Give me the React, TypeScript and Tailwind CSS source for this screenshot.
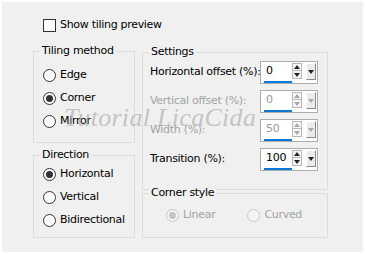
import React from 'react';

const FONT = { fontFamily: '"DejaVu Sans", "Liberation Sans", sans-serif' };

function Radio({ checked, disabled, label }: { checked?: boolean; disabled?: boolean; label: string }) {
  return (
    <div className="flex items-center h-[23px] gap-[4px]">
      <span
        className={`w-[13px] h-[13px] rounded-full border flex items-center justify-center shrink-0 ${
          disabled ? 'border-[#c6c6c6] bg-[#f4f4f4]' : 'border-[#333333] bg-white'
        }`}
      >
        {checked && (
          <span className={`w-[7px] h-[7px] rounded-full ${disabled ? 'bg-[#c4c4c4]' : 'bg-[#333333]'}`} />
        )}
      </span>
      <span className={`whitespace-nowrap ${disabled ? 'text-[#a3a3a3]' : 'text-black'}`}>{label}</span>
    </div>
  );
}

function Group({ title, className, children }: { title: string; className?: string; children: React.ReactNode }) {
  return (
    <div className={`relative border border-[#dcdcdc] ${className ?? ''}`}>
      <span className="absolute left-[6px] -top-[8px] px-[2px] bg-[#f0f0f0] leading-[14px] text-black whitespace-nowrap">
        {title}
      </span>
      {children}
    </div>
  );
}

function Spinner({ value, disabled }: { value: string; disabled?: boolean }) {
  const arrow = disabled ? '#a8a8a8' : '#222222';
  return (
    <div className="w-[58px] h-[23px] border border-[#acacac] bg-white flex items-start shrink-0">
      <div className="w-[31px] h-full flex flex-col pl-[3px] pt-[2px]">
        <span className={`pl-[2px] leading-[14px] ${disabled ? 'text-[#9a9a9a]' : 'text-black'}`}>{value}</span>
        <span className="mt-[3px] w-[28px] h-[2px] bg-[#0a78d7]" />
      </div>
      <div className="w-[10px] mt-[1px] flex flex-col">
        <div className="h-[8px] border border-[#b8b8b8] bg-[#f6f6f6] flex items-center justify-center">
          <svg width="6" height="4" viewBox="0 0 6 4"><path d="M3 0 L6 4 L0 4 Z" fill={arrow} /></svg>
        </div>
        <div className="h-[8px] border border-[#b8b8b8] border-t-0 bg-[#f6f6f6] flex items-center justify-center">
          <svg width="6" height="4" viewBox="0 0 6 4"><path d="M0 0 L6 0 L3 4 Z" fill={arrow} /></svg>
        </div>
      </div>
      <div className="ml-[4px] mt-[1px] w-[10px] h-[17px] bg-[#ececec] border-l border-t border-l-white border-t-white border-r border-b border-r-[#8a8a8a] border-b-[#8a8a8a] flex items-center justify-center">
        <svg width="6" height="4" viewBox="0 0 6 4"><path d="M0 0 L6 0 L3 4 Z" fill={arrow} /></svg>
      </div>
    </div>
  );
}

function Row({ label, value, disabled }: { label: string; value: string; disabled?: boolean }) {
  return (
    <div className="flex items-center h-[23px]">
      <span className={`w-[110px] whitespace-nowrap ${disabled ? 'text-[#a3a3a3]' : 'text-black'}`}>{label}</span>
      <Spinner value={value} disabled={disabled} />
    </div>
  );
}

export default function App() {
  return (
    <div className="w-[365px] h-[254px] bg-white p-[2px] text-[11px] tracking-[-0.3px]" style={FONT}>
      <div className="relative w-[361px] h-[250px] bg-[#f0f0f0]">
        <div className="flex items-center gap-[4px] pl-[41px] pt-[17px] h-[30px]">
          <span className="w-[13px] h-[13px] border border-[#333333] bg-white" />
          <span className="text-black">Show tiling preview</span>
        </div>

        <div className="flex items-start gap-[7px] pl-[31px] mt-[19px]">
          <div className="w-[102px] flex flex-col">
            <Group title="Tiling method" className="h-[92px] pl-[9px] pt-[12px]">
              <Radio label="Edge" />
              <Radio label="Corner" checked />
              <Radio label="Mirror" />
            </Group>
            <Group title="Direction" className="mt-[12px] h-[83px] pl-[9px] pt-[7px]">
              <Radio label="Horizontal" checked />
              <Radio label="Vertical" />
              <Radio label="Bidirectional" />
            </Group>
          </div>

          <div className="w-[186px] flex flex-col mt-[1px]">
            <Group title="Settings" className="h-[138px] pl-[7px] pt-[8px] flex flex-col gap-[6px]">
              <Row label="Horizontal offset (%):" value="0" />
              <Row label="Vertical offset (%):" value="0" disabled />
              <Row label="Width (%):" value="50" disabled />
              <Row label="Transition (%):" value="100" />
            </Group>
            <Group title="Corner style" className="mt-[3px] h-[45px] pt-[10px] pl-[23px] flex gap-[32px]">
              <Radio label="Linear" checked disabled />
              <Radio label="Curved" disabled />
            </Group>
          </div>
        </div>

        <span
          className="absolute left-[62px] top-[96px] text-[26px] italic text-[#9c9c9c]/55 pointer-events-none tracking-[0.3px] whitespace-nowrap"
          style={{ fontFamily: '"Liberation Serif", serif' }}
        >
          Tutorial LicaCida
        </span>
      </div>
    </div>
  );
}
